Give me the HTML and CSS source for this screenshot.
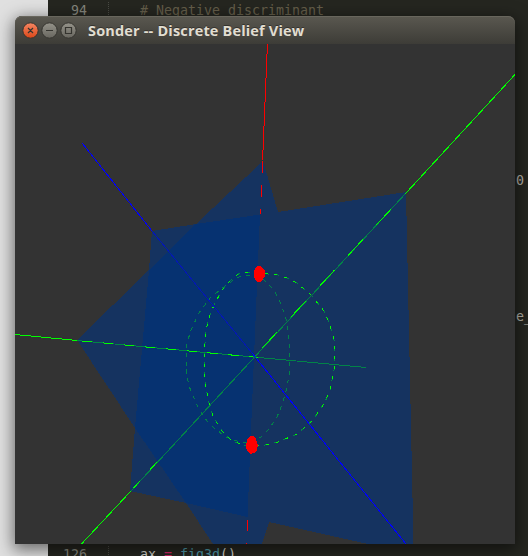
FILE: index.html
```
<!DOCTYPE html>
<html lang="en">
<head>
<meta charset="utf-8">
<title>Sonder -- Discrete Belief View</title>
<link rel="stylesheet" href="styles.css">
</head>
<body>
<div class="desktop">
  <div class="margin"></div>
  <div class="editor">
    <div class="line guided"><span class="num">94</span><code class="comment"># Negative discriminant</code></div>
    <div class="line"><span class="num"></span><code class="tail">0</code></div>
    <div class="line"><span class="num"></span><code class="tail">e_</code></div>
    <div class="line guided"><span class="num">126</span><code>ax <span class="op">=</span> <span class="fn">fig3d</span>()</code></div>
  </div>
</div>
<section class="window">
  <header class="titlebar">
    <svg class="controls" width="64" height="18" viewBox="0 0 64 18">
      <defs>
        <linearGradient id="close" x2="0" y2="1"><stop stop-color="#f48663"/><stop offset="1" stop-color="#dc4718"/></linearGradient>
        <linearGradient id="gray" x2="0" y2="1"><stop stop-color="#95938a"/><stop offset="1" stop-color="#68665f"/></linearGradient>
      </defs>
      <g stroke="#35342f">
        <circle cx="8.5" cy="8.5" r="7.7" fill="url(#close)"/>
        <circle cx="27.500" cy="8.5" r="7.7" fill="url(#gray)"/>
        <circle cx="46.500" cy="8.5" r="7.7" fill="url(#gray)"/>
        <path d="M6 6l5 5M11 6l-5 5M24 8.5h7M43.500 5.5h6v6h-6z" fill="none" stroke-width="1.2"/>
      </g>
    </svg>
    <h1>Sonder -- Discrete Belief View</h1>
  </header>
  <svg class="scene" width="500" height="500" viewBox="15 44 500 500" shape-rendering="crispEdges">
    <path class="plane" d="M77 340L149 270L152 231L196 224L263 161L278 212L406 192L413.500 544H368L269 522L262 544H213L186 503L130 491L135 428Z"/>
    <path class="overlap" d="M149 270L196 224L260 214.500L254 357L247.500 517L186 503L135 428Z"/>
    <g class="curve">
      <path class="dim" stroke-dasharray="4 5" d="M186 366L186 357L187 343L191 330L199 313L211 297L225 286L235 279L243 275L252 275L263 279L272 288L278 297L282 307L287 322L289 343L290 358L289 375L287 388L282 405L277 417L269 429L262 436L253 443L240 442L226 437L214 428L207 421L199 409L193 396L189 386L187 376Z"/>
      <path class="dim" stroke-dasharray="5 5" d="M204 357L206 330L209 318L214 305L222 290L232 279L240 273L248 272L258 272L268 274L278 275L287 278L297 283L311 295L324 311L330 325L334 340L335 357L334 370L330 390L325 402L313 420L297 434L278 442L265 445L244 445L232 441L222 431L213 416L208 400L205 380Z"/>
      <path class="bright" stroke-dasharray="3 7" d="M204 357L206 330L209 318L214 305L222 290L232 279L240 273L248 272L258 272L268 274L278 275L287 278L297 283L311 295L324 311L330 325L334 340L335 357L334 370L330 390L325 402L313 420L297 434L278 442L265 445L244 445L232 441L222 431L213 416L208 400L205 380Z"/>
    </g>
    <g class="curve">
      <path class="dim" d="M77 340.500L366 367.500"/>
      <path class="bright" d="M15 334.500L77 340.500"/>
      <path class="bright" stroke-dasharray="10.500 10.500" stroke-dashoffset="16" d="M77 340.500L258 357.500"/>
      <path class="dim" d="M406.500 192.500L130.500 491.500"/>
      <path class="bright" d="M515 74.500L406.500 192.500M130.500 491.500L81 544.500"/>
      <path class="bright" stroke-dasharray="22 20" stroke-dashoffset="20" d="M406.500 192.500L253 358"/>
      <path class="bright" stroke-dasharray="10 15" d="M157 462L130.500 491.500"/>
      <path class="axis-z" d="M82.500 143.500L152 231M252 353L406 544"/>
      <path class="axis-z faint" d="M152 231L252 353"/>
      <path class="axis-x" d="M267.500 44V54M266.500 54V78M265.500 78V102M264.500 102V126M263.500 126V150M262.500 150V160M262.500 161V173M261.500 185V197M260.500 209V214M247.500 520V531M246.500 543V544"/>
    </g>
    <path class="marker" d="M257 266h4l2 3 2 2v5l-2 3-2 3h-4l-2-3-1-3v-5l1-2z"/>
    <path class="marker" d="M250 436h3l3 3 2 6-1 5-3 3-4 1-3-3-1-5 1-6z"/>
  </svg>
</section>
</body>
</html>
```
FILE: styles.css
```
* { box-sizing: border-box; }
body {
  margin: 0;
  width: 528px;
  height: 556px;
  overflow: hidden;
  position: relative;
  background: #22231e;
}
.desktop {
  display: grid;
  grid-template-columns: 48px 480px;
  height: 556px;
}
.margin { background: #e0e0e0; }
.editor {
  display: grid;
  grid-template-rows: 170px 136px 238px 17px;
  align-content: start;
  overflow: hidden;
  padding-top: 2px;
  background: #252620;
  font: 13.3px/17px "DejaVu Sans Mono", monospace;
  color: #d6d6cf;
}
.line {
  display: grid;
  grid-template-columns: 39px 1fr;
  column-gap: 53px;
  white-space: pre;
}
.num { text-align: right; color: #85867e; }
code { font: inherit; }
.comment { color: #655f4b; }
.tail { padding-left: 376px; color: #b2b1a9; }
.op { color: #d22565; }
.fn { color: #4d99aa; }
.guided {
  background: repeating-linear-gradient(#4a4b44 0 1px, transparent 1px 2px) 60px 0 / 1px 17px no-repeat;
}
.window {
  position: absolute;
  left: 15px;
  top: 16px;
  width: 500px;
  height: 528px;
  border-radius: 7px 7px 0 0;
  background: #333;
  box-shadow: 0 4px 16px 2px rgba(0, 0, 0, .52);
}
.titlebar {
  height: 28px;
  display: flex;
  align-items: center;
  gap: 2px;
  padding-left: 7px;
  border-radius: 7px 7px 0 0;
  background: linear-gradient(#5a5850, #3d3c37);
  box-shadow: inset 0 1px #68665d;
}
.controls { display: block; margin-top: 2px; }
h1 {
  margin: 1px 0 0;
  font: bold 14.5px/20px "Open Sans", sans-serif;
  letter-spacing: .17px;
  color: #e1ddd1;
  text-shadow: 0 -1px #34332e;
  white-space: pre;
}
.scene { display: block; }
.plane { fill: #153360; }
.overlap { fill: #063271; }
.curve path { fill: none; stroke-width: 1; }
.curve .dim { stroke: #028348; }
.curve .bright { stroke: #00ff00; }
.curve .axis-z { stroke: #0000ff; }
.curve .faint { stroke: #0418b4; }
.curve .axis-x { stroke: #ff0000; }
.marker { fill: #ff0000; }
```
